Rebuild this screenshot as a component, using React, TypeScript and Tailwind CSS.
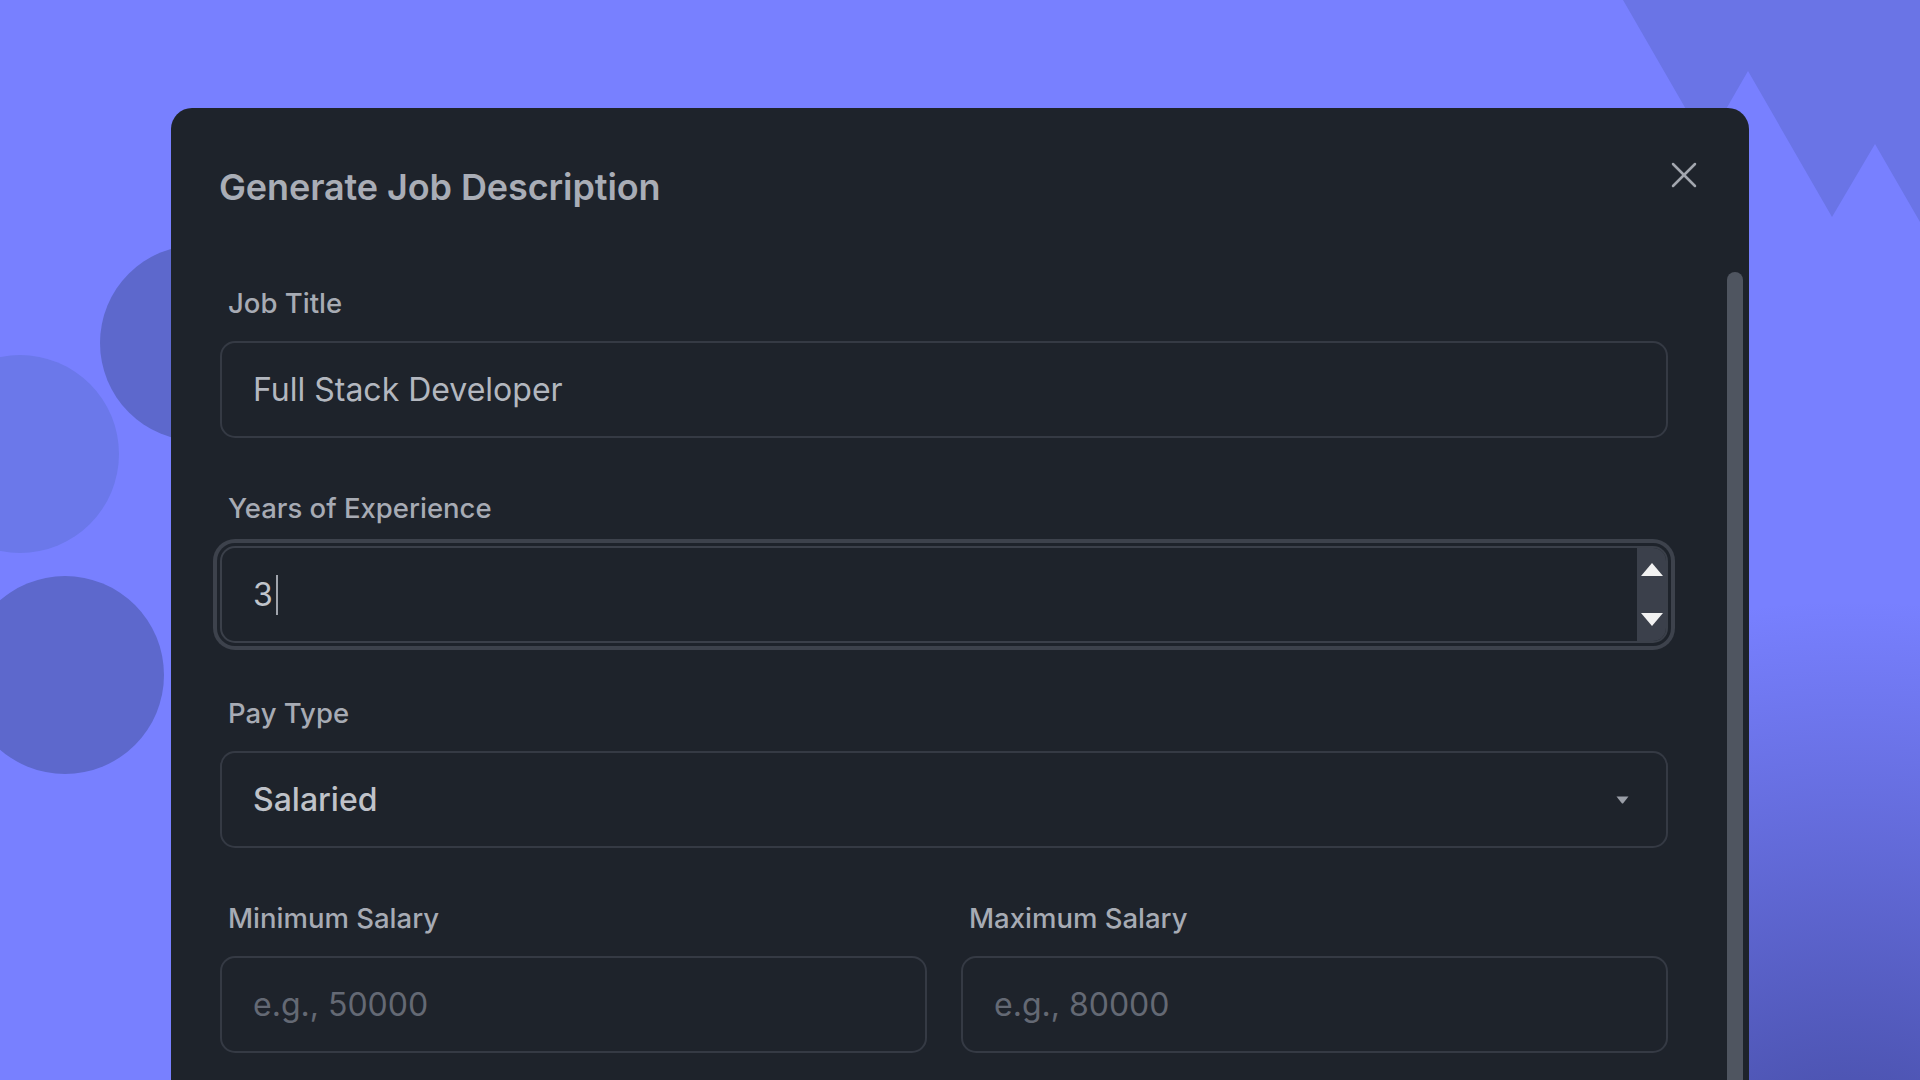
import React from "react";

function Label({ children }: { children: React.ReactNode }) {
  return (
    <div className="pl-2 text-[27.5px] leading-[34px] font-medium text-[#a7abb4]">
      {children}
    </div>
  );
}

function Field({ label, children }: { label: string; children: React.ReactNode }) {
  return (
    <div className="flex flex-col">
      <Label>{label}</Label>
      <div className="mt-[21px]">{children}</div>
    </div>
  );
}

const boxBase =
  "h-[97px] rounded-[15px] border-2 border-[#353a44] bg-[#1e232b] flex items-center pl-[31px] text-[32px]";

export default function App() {
  return (
    <div className="relative w-[1920px] h-[1080px] overflow-hidden bg-[#7880ff] font-[Inter,'Noto_Sans',sans-serif]">
      <svg
        className="absolute inset-0"
        width="1920"
        height="1080"
        viewBox="0 0 1920 1080"
      >
        <defs>
          <radialGradient id="br" cx="1850" cy="1250" r="650" gradientUnits="userSpaceOnUse">
            <stop offset="0" stopColor="#3f4699" stopOpacity="1" />
            <stop offset="1" stopColor="#3f4699" stopOpacity="0" />
          </radialGradient>
        </defs>
        <rect x="0" y="0" width="1920" height="1080" fill="#7880ff" />
        <rect x="0" y="0" width="1920" height="1080" fill="url(#br)" />
        <polygon
          points="1623,0 1920,0 1920,222 1875,144 1832,217 1748,71 1706,144"
          fill="#6a74e6"
        />
        <circle cx="198" cy="343" r="98" fill="#5d68cc" />
        <circle cx="20" cy="454" r="99" fill="#6b78ea" />
        <circle cx="65" cy="675" r="99" fill="#5d68cc" />
      </svg>

      <div className="relative z-10 pt-[108px] pl-[171px]">
        <div className="relative w-[1578px] h-[1000px] rounded-[21px] bg-[#1e232b]">
          <button className="absolute top-[54px] right-[52px] w-[26px] h-[26px] flex items-center justify-center">
            <svg width="26" height="26" viewBox="0 0 26 26">
              <line x1="2" y1="2" x2="24" y2="24" stroke="#a3a7af" strokeWidth="2.5" strokeLinecap="round" />
              <line x1="24" y1="2" x2="2" y2="24" stroke="#a3a7af" strokeWidth="2.5" strokeLinecap="round" />
            </svg>
          </button>

          <div className="pl-[48px] pt-[57px]">
            <h1 className="text-[36px] leading-[44px] font-semibold text-[#a9adb6] tracking-[-0.1px]">
              Generate Job Description
            </h1>
          </div>

          <div className="mt-[63px] flex">
            <div className="ml-[49px] w-[1448px] pt-[14px] flex flex-col gap-[53px]">
              <Field label="Job Title">
                <div className={boxBase + " text-[#b3b7bf]"}>Full Stack Developer</div>
              </Field>

              <Field label="Years of Experience">
                <div className="relative h-[97px] rounded-[15px] border-2 border-[#3b404a] bg-[#1e232b] shadow-[0_0_0_3px_#1e232b,0_0_0_7px_#3d424c] flex items-center pl-[31px] text-[32px] text-[#c0c4cb]">
                  <span>3</span>
                  <span className="ml-[3px] w-[2px] h-[40px] bg-[#a0a4ac]" />
                  <div className="absolute right-0 top-0 bottom-0 w-[29px] rounded-r-[13px] bg-[#3b404b] flex flex-col items-center pt-[15px]">
                    <svg width="22" height="13" viewBox="0 0 22 13">
                      <polygon points="11,0 22,13 0,13" fill="#f2f2f2" />
                    </svg>
                    <svg className="mt-[37px]" width="22" height="13" viewBox="0 0 22 13">
                      <polygon points="0,0 22,0 11,13" fill="#f2f2f2" />
                    </svg>
                  </div>
                </div>
              </Field>

              <Field label="Pay Type">
                <div className={boxBase + " justify-between pr-[37px] font-medium text-[#bfc2c9]"}>
                  <span>Salaried</span>
                  <svg width="13" height="8" viewBox="0 0 13 8">
                    <path d="M0.5 0.5 H12.5 L7.2 7.2 Q6.5 8 5.8 7.2 Z" fill="#9a9ea7" />
                  </svg>
                </div>
              </Field>

              <div className="grid grid-cols-2 gap-x-[34px]">
                <Field label="Minimum Salary">
                  <div className={boxBase + " text-[#646974]"}>e.g., 50000</div>
                </Field>
                <Field label="Maximum Salary">
                  <div className={boxBase + " text-[#646974]"}>e.g., 80000</div>
                </Field>
              </div>
            </div>

            <div className="ml-[59px] w-[16px] h-[900px] rounded-full bg-[#4f5560]" />
          </div>
        </div>
      </div>
    </div>
  );
}
